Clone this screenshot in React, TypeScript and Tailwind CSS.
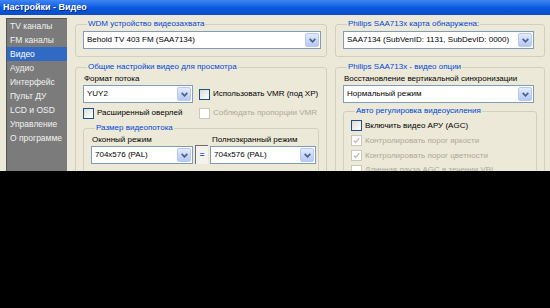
import React from 'react';

const Chevron: React.FC = () => (
  <svg width="7" height="5" viewBox="0 0 7 5">
    <path d="M0.7 0.8 L3.5 3.8 L6.3 0.8" fill="none" stroke="#4d6185" strokeWidth="1.7" />
  </svg>
);

const Combo: React.FC<{ value: string; className?: string }> = ({ value, className }) => (
  <div className={`flex h-[18px] items-center border border-[#7f9db9] bg-white ${className || ''}`}>
    <span className="flex-1 truncate pl-[3px] text-[8px] leading-none text-black">{value}</span>
    <div className="m-[1px] flex h-[14px] w-[14px] items-center justify-center rounded-[2px] border border-[#b9c9ef] bg-gradient-to-b from-[#e2eafe] to-[#b4c8f6]">
      <Chevron />
    </div>
  </div>
);

const Check: React.FC<{ label: string; disabled?: boolean; checked?: boolean }> = ({ label, disabled, checked }) => (
  <div className="flex items-center gap-[3px]">
    <div
      className={`flex h-[11px] w-[11px] shrink-0 items-center justify-center border ${
        disabled ? 'border-[#cac8bb] bg-white' : 'border-[#1c5180] bg-gradient-to-br from-[#dcdcd7] to-white'
      }`}
    >
      {checked && (
        <svg width="7" height="7" viewBox="0 0 7 7">
          <path d="M0.8 3.5 L2.7 5.4 L6.2 1.2" fill="none" stroke={disabled ? '#c4c2b4' : '#21a121'} strokeWidth="1.4" />
        </svg>
      )}
    </div>
    <span className={`whitespace-nowrap text-[8px] leading-none ${disabled ? 'text-[#aca899]' : 'text-black'}`}>{label}</span>
  </div>
);

const Group: React.FC<{ title: string; className?: string; children: React.ReactNode }> = ({ title, className, children }) => (
  <fieldset className={`min-w-0 rounded-[3px] border border-[#d0d0bf] ${className || ''}`}>
    <legend className="ml-[4px] whitespace-nowrap px-[1px] text-[8px] leading-[12px] text-[#0046d5]">{title}</legend>
    {children}
  </fieldset>
);

const menu = ['TV каналы', 'FM каналы', 'Видео', 'Аудио', 'Интерфейс', 'Пульт ДУ', 'LCD и OSD', 'Управление', 'О программе'];

export default function App() {
  return (
    <div className="h-[308px] w-[550px] overflow-hidden bg-black font-['Liberation_Sans',Arial,sans-serif]">
      <div className="flex h-[171px] flex-col overflow-hidden bg-[#ece9d8]">
        {/* title bar */}
        <div className="flex h-[15px] shrink-0 items-center bg-gradient-to-b from-[#3f86f4] via-[#0a5ae0] to-[#0a4cc8] pl-[3px]">
          <span className="text-[9px] font-bold leading-none text-white [text-shadow:1px_1px_#0c2a80]">Настройки - Видео</span>
        </div>

        <div className="flex min-h-0 flex-1 pl-[6px] pt-[3px]">
          {/* sidebar */}
          <div className="w-[61px] shrink-0 border-l border-t border-[#555] bg-[#7b7b7b]">
            {menu.map((m) => (
              <div
                key={m}
                className={`flex h-[14px] items-center pl-[3px] text-[8.5px] leading-none ${
                  m === 'Видео' ? 'bg-[#316ac5] text-white' : 'text-[#f2f2f2]'
                }`}
              >
                {m}
              </div>
            ))}
          </div>

          {/* left column */}
          <div className="ml-[8px] flex w-[252px] shrink-0 flex-col">
            <Group title="WDM устройство видеозахвата" className="px-[7px] pb-[7px]">
              <Combo value="Behold TV 403 FM (SAA7134)" className="mt-[1px] w-[238px]" />
            </Group>

            <Group title="Общие настройки видео для просмотра" className="mt-[4px] px-[7px] pb-[8px]">
              <div className="flex items-end">
                <div className="flex w-[110px] flex-col">
                  <span className="pl-[1px] text-[8px] leading-[11px] text-black">Формат потока</span>
                  <Combo value="YUY2" className="mt-[1px]" />
                </div>
                <div className="ml-[6px] flex h-[18px] items-center">
                  <Check label="Использовать VMR (под XP)" />
                </div>
              </div>
              <div className="mt-[4px] flex h-[12px] items-center">
                <div className="w-[110px]">
                  <Check label="Расширенный оверлей" />
                </div>
                <div className="ml-[6px]">
                  <Check label="Соблюдать пропорции VMR" disabled />
                </div>
              </div>

              <Group title="Размер видеопотока" className="mt-[3px] pl-[7px] pb-[8px]">
                <div className="flex items-end">
                  <div className="flex w-[102px] flex-col">
                    <span className="pl-[1px] text-[8px] leading-[11px] text-black">Оконный режим</span>
                    <Combo value="704x576 (PAL)" className="mt-[1px]" />
                  </div>
                  <div className="ml-[2px] flex h-[19px] w-[13px] items-center justify-center border-l border-t border-[#6f6f6f] bg-[#f3f2ec] text-[8px] font-bold leading-none text-[#2a56c6]">
                    =
                  </div>
                  <div className="ml-[2px] flex w-[106px] flex-col">
                    <span className="pl-[2px] text-[8px] leading-[11px] text-black">Полноэкранный режим</span>
                    <Combo value="704x576 (PAL)" className="mt-[1px]" />
                  </div>
                </div>
              </Group>
            </Group>
          </div>

          {/* right column */}
          <div className="ml-[8px] flex w-[210px] shrink-0 flex-col">
            <Group title="Philips SAA713x карта обнаружена:" className="px-[7px] pb-[7px]">
              <Combo value="SAA7134 (SubVenID: 1131, SubDevID: 0000)" className="mt-[1px] w-[191px]" />
            </Group>

            <Group title="Philips SAA713x - видео опции" className="mt-[4px] px-[7px] pb-[8px]">
              <span className="block pl-[1px] text-[8px] leading-[11px] text-black">Восстановление вертикальной синхронизации</span>
              <Combo value="Нормальный режим" className="mt-[1px] w-[191px]" />

              <Group title="Авто регулировка видеоусиления" className="mt-[2px] pl-[7px] pb-[6px]">
                <div className="mt-[1px] flex h-[15px] items-center">
                  <Check label="Включить видео АРУ (AGC)" />
                </div>
                <div className="flex h-[15px] items-center">
                  <Check label="Контролировать порог яркости" disabled checked />
                </div>
                <div className="flex h-[15px] items-center">
                  <Check label="Контролировать порог цветности" disabled checked />
                </div>
                <div className="flex h-[14px] items-center">
                  <Check label="Длинная пауза AGC в течении VBI" disabled />
                </div>
              </Group>
            </Group>
          </div>
        </div>
      </div>
    </div>
  );
}
